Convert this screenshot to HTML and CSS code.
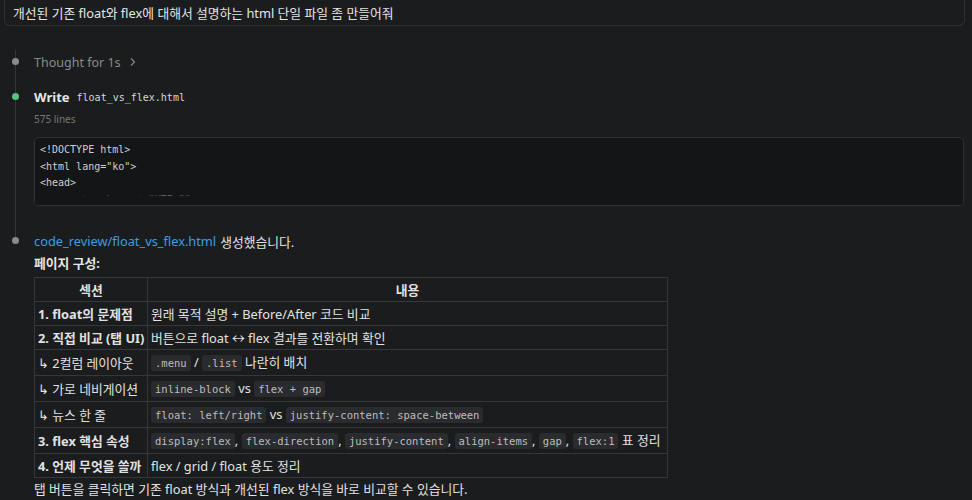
FILE: index.html
```html
<!DOCTYPE html>
<html lang="ko">
<head>
<meta charset="UTF-8">
<title>float vs flex</title>
<link rel="stylesheet" href="styles.css">
</head>
<body>
<div class="prompt">개선된 기존 float와 flex에 대해서 설명하는 html 단일 파일 좀 만들어줘</div>

<div class="timeline">
  <div class="step step-thought">
    <span class="dot dot-grey"></span>
    <span class="thought">Thought for 1s</span>
    <svg class="chev" width="8" height="10" viewBox="0 0 8 10"><path d="M2 1.5 L5.5 5 L2 8.5" fill="none" stroke="#8a8a8a" stroke-width="1.1"/></svg>
  </div>

  <div class="step step-write">
    <span class="dot dot-green"></span>
    <span class="write">Write</span>
    <span class="fname">float_vs_flex.html</span>
  </div>
  <div class="lines">575 lines</div>

  <div class="codebox">
    <div class="codeline">&lt;!DOCTYPE html&gt;</div>
    <div class="codeline">&lt;html lang="ko"&gt;</div>
    <div class="codeline">&lt;head&gt;</div>
    <div class="codeline faded">&nbsp;&nbsp;&nbsp;&nbsp;&lt;meta charset="UTF-8"&gt;</div>
  </div>

  <div class="step step-result">
    <span class="dot dot-grey"></span>
    <span class="link">code_review/float_vs_flex.html</span> 생성했습니다.
  </div>
</div>

<div class="answer">
  <div class="heading">페이지 구성:</div>
  <table class="tbl">
    <thead>
      <tr><th class="c1">섹션</th><th class="c2">내용</th></tr>
    </thead>
    <tbody>
      <tr><td class="b">1. float의 문제점</td><td>원래 목적 설명 + Before/After 코드 비교</td></tr>
      <tr><td class="b">2. 직접 비교 (탭 UI)</td><td>버튼으로 float ↔ flex 결과를 전환하며 확인</td></tr>
      <tr class="coderow"><td>↳ 2컬럼 레이아웃</td><td><code>.menu</code> / <code>.list</code> 나란히 배치</td></tr>
      <tr class="coderow"><td>↳ 가로 네비게이션</td><td><code>inline-block</code> vs <code>flex + gap</code></td></tr>
      <tr class="coderow"><td>↳ 뉴스 한 줄</td><td><code>float: left/right</code> vs <code>justify-content: space-between</code></td></tr>
      <tr class="coderow"><td class="b">3. flex 핵심 속성</td><td><code>display:flex</code>, <code>flex-direction</code>, <code>justify-content</code>, <code>align-items</code>, <code>gap</code>, <code>flex:1</code> 표 정리</td></tr>
      <tr><td class="b">4. 언제 무엇을 쓸까</td><td>flex / grid / float 용도 정리</td></tr>
    </tbody>
  </table>
  <div class="outro">탭 버튼을 클릭하면 기존 float 방식과 개선된 flex 방식을 바로 비교할 수 있습니다.</div>
</div>
</body>
</html>
```

FILE: styles.css
```css
* { box-sizing: border-box; }
html, body {
  margin: 0;
  padding: 0;
  background: #1b1c1e;
  color: #e2e2e2;
  font-family: "Noto Sans", "Noto Sans CJK KR", sans-serif;
  font-size: 12.8px;
  overflow: hidden;
}
body { height: 500px; }

.prompt {
  margin: -12px 7px 0 4px;
  height: 38px;
  padding: 15px 8px 0 8px;
  border: 1px solid #303134;
  border-top: none;
  border-radius: 0 0 6px 6px;
  line-height: 20px;
  color: #e4e4e4;
}

.timeline {
  position: relative;
  padding-left: 34px;
  padding-top: 25px;
}
.timeline::before {
  content: "";
  position: absolute;
  left: 15px;
  top: 24px;
  height: 192px;
  width: 1px;
  background: #34363a;
}

.step {
  position: relative;
  display: flex;
  align-items: center;
  height: 22px;
}
.dot {
  position: absolute;
  left: -22px;
  top: 50%;
  width: 7px;
  height: 7px;
  margin-top: -4px;
  border-radius: 50%;
}
.dot-grey { background: #8b8b8b; }
.dot-green { background: #55c27f; }

.thought { color: #8b8b8b; font-size: 12.5px; }
.chev { margin-left: 8px; }

.step-write { margin-top: 13px; }
.write { font-weight: 700; font-size: 13px; color: #e6e6e6; }
.fname {
  margin-left: 7px;
  font-family: "DejaVu Sans Mono", monospace;
  font-size: 10px;
  color: #d8d8d8;
}
.lines {
  margin-top: 3px;
  font-size: 10px;
  color: #767676;
  height: 16px;
  line-height: 16px;
}

.codebox {
  position: relative;
  margin: 10px 8px 0 0;
  height: 69px;
  overflow: hidden;
  background: #141517;
  border: 1px solid #303134;
  border-radius: 5px;
  padding: 4px 5px 0 5px;
  font-family: "DejaVu Sans Mono", monospace;
  font-size: 10px;
  color: #cfcfcf;
}
.codebox::after {
  content: "";
  position: absolute;
  left: 0;
  right: 0;
  bottom: 0;
  height: 9px;
  background: #141517;
}
.codeline { height: 16.5px; line-height: 16.5px; white-space: pre; }
.codeline.faded { color: #5a5b5d; }

.step-result { margin-top: 24px; color: #e2e2e2; }
.link { color: #3a9fe0; margin-right: 4px; }

.answer { padding-left: 34px; }
.heading { font-weight: 700; height: 22px; line-height: 22px; color: #e6e6e6; margin-bottom: 3px; }

.tbl {
  border-collapse: collapse;
  width: 634px;
  table-layout: fixed;
}
.tbl th, .tbl td {
  border: 1px solid #35373a;
  padding: 0 3px;
  white-space: nowrap;
  text-align: left;
  height: 24px;
  line-height: 20px;
  color: #e2e2e2;
}
.tbl th { text-align: center; font-weight: 700; }
.tbl .c1 { width: 113px; }
.tbl .b { font-weight: 700; }
.tbl tr.coderow td { height: 26px; }

code {
  font-family: "DejaVu Sans Mono", monospace;
  font-size: 10.5px;
  background: #2a2b2e;
  color: #bdbdbd;
  padding: 2px 4px;
  border-radius: 3px;
}

.outro { height: 22px; line-height: 22px; color: #e2e2e2; }
```
